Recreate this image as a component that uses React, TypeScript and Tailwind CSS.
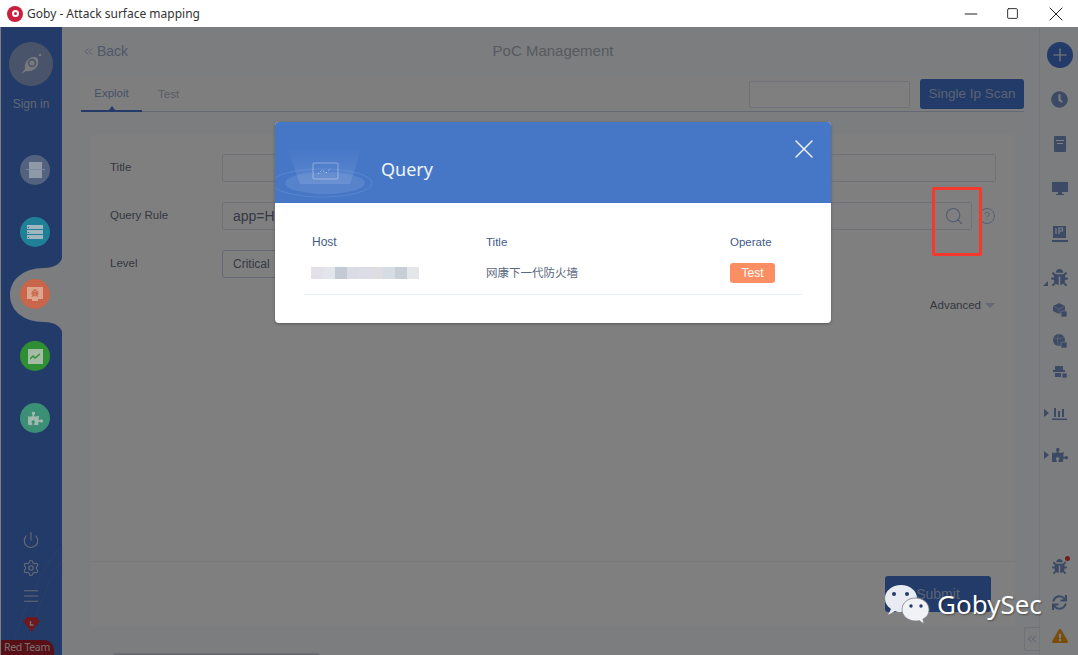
import { ChevronsLeft, Power, Settings, Search, X, CircleHelp, Plus, Minus, Square, AlignJustify } from 'lucide-react';
import { FaBug, FaPuzzlePiece, FaClock, FaExclamationTriangle, FaSync } from 'react-icons/fa';

const SANS = 'font-["Liberation_Sans",Arial,"Noto_Sans_CJK_SC",sans-serif]';

const BLUR_CELLS = ['#e3e1e7', '#e2e5e9', '#c3cad5', '#d9dce4', '#dcdde6', '#dedde2', '#d5dce4', '#c8ced7', '#e4e7ea'];

function NavCircle({ color, children }: { color: string; children: React.ReactNode }) {
  return (
    <div className={`w-[30px] h-[30px] rounded-full flex items-center justify-center ${color}`}>
      {children}
    </div>
  );
}

function Caret() {
  return <span className="block w-0 h-0 border-y-[4px] border-y-transparent border-l-[5px] border-l-[#7a94cc]" />;
}

function LeftSidebar() {
  return (
    <div className="relative w-[61px] ml-px shrink-0 bg-[#4676d0] flex flex-col">
      {/* curve of the active item */}
      <svg className="absolute left-0 top-0 w-[62px] h-[628px]" viewBox="0 0 62 628">
        <path d="M62 226 C62 236 54 241 43 241 C22 241 9 253 9 268 C9 283 22 295 43 295 C54 295 62 300 62 310 Z" fill="#f6fbff" />
        <path d="M60 520 C40 540 25 580 8 625" fill="none" stroke="#5281d6" strokeWidth="1" />
        <path d="M60 535 C45 555 35 590 22 625" fill="none" stroke="#5281d6" strokeWidth="1" />
      </svg>
      <div className="relative flex flex-col h-full">
        <div className="mt-[15px] ml-[8px] w-[44px] h-[44px] rounded-full bg-[#92a9d6] flex items-center justify-center">
          <svg width="26" height="26" viewBox="0 0 26 26">
            <path d="M3 23 L7 18 C6 12 10 6 16 6 C20 6 21 9 20 13 C19 18 13 21 8 20 Z" fill="#f2f4f8" />
            <circle cx="14" cy="12" r="3.4" fill="none" stroke="#92a9d6" strokeWidth="1.6" />
            <circle cx="22" cy="4" r="1.2" fill="#f2f4f8" />
          </svg>
        </div>
        <span className={`mt-[11px] ml-[-1px] w-[62px] text-center text-[12px] leading-[14px] text-[#c0cee8] ${SANS}`}>Sign in</span>
        {/* these sit above the dim layer, they stay brighter in the shot */}
        <div className="relative z-10 ml-[19px] mt-[44px] flex flex-col gap-[32px]">
          <NavCircle color="bg-[#53627f]">
            <div className="w-[13px] h-[16px] bg-[#9099a8] relative">
              <div className="absolute left-[-3px] right-[-3px] top-[7px] h-px bg-[#7d8aa3]" />
            </div>
          </NavCircle>
          <NavCircle color="bg-[#1f8097]">
            <div className="flex flex-col gap-px">
              {[0, 1, 2].map(i => (
                <div key={i} className="w-[16px] h-[4px] bg-[#a0b5c0] flex items-center pl-[1px]">
                  <div className="w-[1px] h-[1px] bg-[#1f6a80]" />
                </div>
              ))}
            </div>
          </NavCircle>
          <NavCircle color="bg-[#c8654a]">
            <div className="flex flex-col items-center">
              <div className="w-[16px] h-[12px] bg-[#dba58e] flex items-center justify-center">
                <FaBug size={8} color="#c8654a" />
              </div>
              <div className="w-[6px] h-[2px] bg-[#dba58e]" />
            </div>
          </NavCircle>
          <NavCircle color="bg-[#2f8f35]">
            <div className="w-[15px] h-[15px] bg-[#a5bba5] flex items-center justify-center">
              <svg width="11" height="7" viewBox="0 0 11 7"><path d="M0 6 L3 3 L5 5 L10 1" fill="none" stroke="#2f8f35" strokeWidth="1.4" /></svg>
            </div>
          </NavCircle>
          <NavCircle color="bg-[#3b8f75]">
            <FaPuzzlePiece size={15} color="#a0b8ae" />
          </NavCircle>
        </div>
        <div className="mt-auto flex flex-col items-center w-[60px] text-[#d0dbf0]">
          <Power size={18} strokeWidth={1.4} />
          <Settings size={18} strokeWidth={1.4} className="mt-[10px]" />
          <AlignJustify size={18} strokeWidth={1.3} className="mt-[10px]" />
          <svg width="17" height="15" viewBox="0 0 17 15" className="mt-[12px]">
            <path d="M4 0H13L17 4L8.5 15L0 4Z" fill="#d9323f" />
            <path d="M7.5 4V8H10.5" fill="none" stroke="#f4dcdc" strokeWidth="1.4" />
          </svg>
        </div>
        <div className="mt-[8px] w-[53px] h-[15px] rounded-tr-[10px] bg-[#b0212f] text-[#f2dfe0] text-[10.5px] leading-[15px] pl-[3px] tracking-[-0.3px] font-['Noto_Sans',sans-serif]">
          Red Team
        </div>
      </div>
    </div>
  );
}

function FormRow({ label, children }: { label: string; children: React.ReactNode }) {
  return (
    <div className="flex items-center h-[28px]">
      <span className="w-[112px] text-[11.5px] text-[#6b7080]">{label}</span>
      {children}
    </div>
  );
}

function PageContent() {
  return (
    <div className={`flex-1 min-w-0 flex flex-col ${SANS}`}>
      <div className="relative h-[50px] flex items-center pl-[20px] pb-[2px]">
        <ChevronsLeft size={13} color="#9fb0d4" strokeWidth={1.6} />
        <span className="ml-[2px] text-[14px] text-[#9fb0d4]">Back</span>
        <span className="absolute left-0 right-0 ml-[5px] text-center text-[15px] text-[#aeb4c0]">PoC Management</span>
      </div>
      <div className="ml-[19px] mr-[15px] h-[35px] bg-[#fcfdff] border-b border-[#c9d3e6] flex items-stretch relative">
        <div className="w-[61px] relative border-b-2 border-[#4676d0] mb-[-1px] pt-[1px] flex items-center justify-center text-[11.5px] text-[#8ea4d0]">
          Exploit
          <span className="absolute bottom-0 left-[28px] w-0 h-0 border-x-[3px] border-x-transparent border-b-[4px] border-b-[#4676d0]" />
        </div>
        <div className="ml-[16px] pt-[1px] flex items-center text-[11.5px] text-[#b3bac8]">Test</div>
        <div className="ml-auto flex items-center">
          <div className="w-[161px] h-[27px] border border-[#dde3ec] rounded-[2px] bg-white" />
          <div className="ml-[10px] w-[104px] h-[30px] rounded-[3px] bg-[#4676d0] text-[#b4c6e6] text-[13.5px] flex items-center justify-center">Single Ip Scan</div>
        </div>
      </div>
      <div className="ml-[29px] mr-[24px] mt-[23px] h-[491px] bg-white flex flex-col">
        <div className="flex-1 pl-[19px] pr-[19px] pt-[19px] flex flex-col gap-[20px] relative">
          <FormRow label="Title">
            <div className="flex-1 h-full border border-[#dde3ec] rounded-[2px]" />
          </FormRow>
          <FormRow label="Query Rule">
            <div className="w-[750px] h-full border border-[#dde3ec] rounded-[2px] flex items-center pl-[10px] pr-[7px] justify-between text-[14px] text-[#6b7488]">
              <span>app=HUAWEI</span>
              <Search size={20} strokeWidth={1.4} color="#9fb8e0" />
            </div>
            <CircleHelp size={18} strokeWidth={1.2} color="#9fb8e0" className="ml-[6px]" />
          </FormRow>
          <FormRow label="Level">
            <div className="w-[180px] h-full border border-[#c9d3e6] rounded-[3px] flex items-center pl-[10px] text-[12px] text-[#6b7488]">Critical</div>
          </FormRow>
          <div className="-mt-[1px] mr-[1px] flex justify-end items-center text-[11.5px] text-[#6b7080]">
            Advanced
            <span className="ml-[4px] w-0 h-0 border-x-[5px] border-x-transparent border-t-[5px] border-t-[#c9d3e6]" />
          </div>
        </div>
        <div className="h-[65px] border-t border-[#f2f2f2] flex justify-end pt-[14px] pr-[24px]">
          <div className="w-[106px] h-[36px] rounded-[3px] bg-[#4676d0] text-[#b4c6e6] text-[14px] flex items-center justify-center">Submit</div>
        </div>
      </div>
      <div className="relative mt-auto h-[28px] flex justify-end">
        <div className="w-[15px] h-[24px] border border-r-0 border-[#dfe5f0] rounded-l-[3px] flex items-center justify-center">
          <ChevronsLeft size={14} color="#9fb0d4" strokeWidth={1.5} />
        </div>
        {/* text under the fold, only its top pixels are in the shot */}
        <div className="absolute left-[52px] bottom-[-1px] w-[205px] h-[2px] bg-[#a9afba] blur-[1px]" />
      </div>
    </div>
  );
}

function RightRail() {
  const ic = '#7a94cc';
  return (
    <div className="w-[39px] shrink-0 border-l border-[#e6ebf4] flex flex-col items-center">
      <div className="relative ml-[1px] w-full flex flex-col items-center">
        <div className="mt-[15px] w-[26px] h-[26px] rounded-full bg-[#4676d0] flex items-center justify-center">
          <Plus size={20} strokeWidth={2} color="#c9d6ec" />
        </div>
        <FaClock size={17} color={ic} className="mt-[23px]" />
        <div className="mt-[28px] w-[12px] h-[16px] rounded-[1px] bg-[#7a94cc] flex flex-col items-center pt-[4px] gap-[2px]">
          <div className="w-[8px] h-px bg-white" />
          <div className="w-[6px] h-px bg-white" />
        </div>
        <svg width="16" height="14" viewBox="0 0 16 14" className="mt-[30px]">
          <path d="M0 0H16V10H10V12H12V13H4V12H6V10H0Z" fill={ic} />
        </svg>
        <svg width="16" height="16" viewBox="0 0 16 16" className="mt-[30px]">
          <path d="M1 0H14V12H1ZM0 14H16V16H0Z" fill={ic} />
          <path d="M4 2V8M7 8V2H10.5V5H7" fill="none" stroke="#fff" strokeWidth="1.2" />
        </svg>
        <div className="mt-[27px] flex items-center relative">
          <span className="absolute left-[-8px] bottom-0 w-0 h-0 border-l-[5px] border-l-transparent border-b-[5px] border-b-[#7a94cc]" />
          <FaBug size={17} color={ic} />
        </div>
        <svg width="14" height="14" viewBox="0 0 14 14" className="mt-[17px]">
          <path d="M6 0L12 3V8L6 11L0 8V3Z" fill={ic} />
          <path d="M0 3L6 6V11M6 6L12 3" fill="none" stroke="#c8d4ec" strokeWidth="0.7" />
          <rect x="8" y="8" width="6" height="6" rx="1" fill={ic} stroke="#f6fbff" strokeWidth="0.6" />
        </svg>
        <svg width="14" height="14" viewBox="0 0 14 14" className="mt-[17px]">
          <circle cx="6" cy="6" r="6" fill={ic} />
          <path d="M1 4C4 5 8 5 11 3M6 0C4 4 4 8 6 12" fill="none" stroke="#c8d4ec" strokeWidth="0.7" />
          <rect x="8" y="8" width="6" height="6" rx="1" fill={ic} stroke="#f6fbff" strokeWidth="0.6" />
        </svg>
        <svg width="14" height="14" viewBox="0 0 14 14" className="mt-[17px]">
          <path d="M2 1H10V5H12V7H0V5H2ZM2 8H8V12H2Z" fill={ic} />
          <rect x="9" y="8" width="5" height="5" rx="1" fill={ic} stroke="#f6fbff" strokeWidth="0.6" />
        </svg>
        <div className="mt-[27px] relative">
          <span className="absolute left-[-8px] top-[3px]"><Caret /></span>
          <svg width="15" height="14" viewBox="0 0 15 14" className="block">
            <path d="M2 2H4V11H2ZM6 5H8V11H6ZM10 3H12V11H10ZM0 12.5H15V14H0Z" fill={ic} />
          </svg>
        </div>
        <div className="mt-[27px] relative">
          <span className="absolute left-[-8px] top-[4px]"><Caret /></span>
          <FaPuzzlePiece size={16} color={ic} className="block" />
        </div>
      </div>
      <div className="mt-auto ml-[1px] flex flex-col items-center">
        <div className="relative">
          <FaBug size={15} color={ic} className="block" />
          <span className="absolute right-[-3px] top-[-3px] w-[5px] h-[5px] rounded-full bg-[#e03c3c]" />
        </div>
        <FaSync size={15} color={ic} className="mt-[21px]" />
        <FaExclamationTriangle size={16} color="#f59a16" className="mt-[18px] mb-[11px]" />
      </div>
    </div>
  );
}

function QueryModal() {
  return (
    <div className={`absolute left-[275px] top-[95px] w-[556px] h-[201px] rounded-[4px] bg-white overflow-hidden shadow-[0_1px_3px_rgba(0,0,0,0.3)] ${SANS}`}>
      <div className="relative h-[81px] bg-[#4677c7] flex items-center pl-[106px] pt-[13px]">
        <svg className="absolute left-0 top-0" width="110" height="81" viewBox="0 0 110 81">
          <defs>
            <linearGradient id="beam" x1="0" y1="0" x2="0" y2="1">
              <stop offset="0" stopColor="#ffffff" stopOpacity="0" />
              <stop offset="1" stopColor="#ffffff" stopOpacity="0.12" />
            </linearGradient>
          </defs>
          <path d="M12 25H87L75 62H25Z" fill="url(#beam)" />
          <ellipse cx="47" cy="61" rx="50" ry="14" fill="none" stroke="#ffffff" strokeOpacity="0.1" />
          <ellipse cx="50" cy="61" rx="40" ry="11" fill="#ffffff" fillOpacity="0.09" />
          <rect x="38" y="41" width="25" height="16" rx="1" fill="none" stroke="#ffffff" strokeOpacity="0.35" />
          <path d="M43 52L47 48L51 51L56 46" fill="none" stroke="#ffffff" strokeOpacity="0.55" strokeDasharray="1.5 2" />
        </svg>
        <span className="relative text-[18px] text-[#eef3fb] font-['Noto_Sans',sans-serif]">Query</span>
        <X size={32} strokeWidth={1.1} color="#eef3fb" className="absolute right-[11px] top-[11px]" />
      </div>
      <div className="mx-[29px] h-[92px] border-b border-[#e8eef7] text-[11.5px] text-[#3f5a88]">
        <div className="flex pt-[32px] h-[52px] leading-[14px]">
          <span className="ml-[8px] w-[174px] text-[12px]">Host</span>
          <span className="w-[244px]">Title</span>
          <span>Operate</span>
        </div>
        <div className="flex items-center h-[20px] mt-[8px]">
          <div className="ml-[7px] w-[175px] flex">
            {BLUR_CELLS.map((c, i) => (
              <div key={i} className="w-[12px] h-[12px]" style={{ backgroundColor: c }} />
            ))}
          </div>
          <span className="w-[244px] text-[#5a6880] font-['Noto_Sans_CJK_SC',sans-serif]">网康下一代防火墙</span>
          <div className="w-[45px] h-[20px] rounded-[3px] bg-[#fb8f63] text-white text-[12px] flex items-center justify-center">Test</div>
        </div>
      </div>
    </div>
  );
}

export default function App() {
  return (
    <div className="relative w-[1078px] h-[655px] overflow-hidden bg-white flex flex-col">
      <div className="h-[27px] shrink-0 flex items-center bg-white">
        <div className="ml-[7px] w-[16px] h-[16px] rounded-full bg-[#c9203f] flex items-center justify-center">
          <div className="w-[7px] h-[7px] rounded-full border-2 border-white" />
        </div>
        <span className="ml-[4px] text-[12px] text-[#333] font-['Noto_Sans',sans-serif]">Goby - Attack surface mapping</span>
        <div className="ml-auto flex items-center text-[#222]">
          <Minus size={20} strokeWidth={1.2} className="mr-[25px]" />
          <Square size={13} strokeWidth={1.7} className="mr-[25px]" />
          <X size={24} strokeWidth={1} className="mr-[10px]" />
        </div>
      </div>
      <div className="relative flex-1 min-h-0 flex bg-[#f6fbff]">
        <LeftSidebar />
        <PageContent />
        <RightRail />
        <div className="absolute inset-0 bg-black/50" />
        <QueryModal />
        {/* annotation and watermark over the shot */}
        <div className="absolute left-[932px] top-[160px] w-[50px] h-[69px] border-[3px] border-[#f5392c] rounded-[2px]" />
        <div className="absolute left-[884px] top-[557px] flex items-center">
          <svg width="46" height="40" viewBox="0 0 46 40">
            <path d="M17 1C8 1 1 7 1 14C1 19 3 22 7 25L4 31L11 27C13 28 15 28 17 28C26 28 33 22 33 14C33 7 26 1 17 1Z" fill="#e8ebf2" />
            <path d="M31.5 14C24 14 18 19 18 25.5C18 32 24 37 31.5 37C33 37 34 37 35 36.5L40 40L39 35C43 33 45 30 45 25.5C45 19 39 14 31.5 14Z" fill="#f1f2f5" stroke="#7b8087" strokeWidth="0.8" />
            <circle cx="10" cy="10" r="2" fill="#233b68" />
            <circle cx="23" cy="10" r="2" fill="#233b68" />
            <circle cx="27" cy="22" r="1.7" fill="#233b68" />
            <circle cx="37" cy="22" r="1.7" fill="#233b68" />
          </svg>
          <span className="ml-[7px] text-[26px] leading-none text-white font-['Noto_Sans',sans-serif] [text-shadow:1px_1px_2px_rgba(0,0,0,0.4)]">GobySec</span>
        </div>
      </div>
    </div>
  );
}
